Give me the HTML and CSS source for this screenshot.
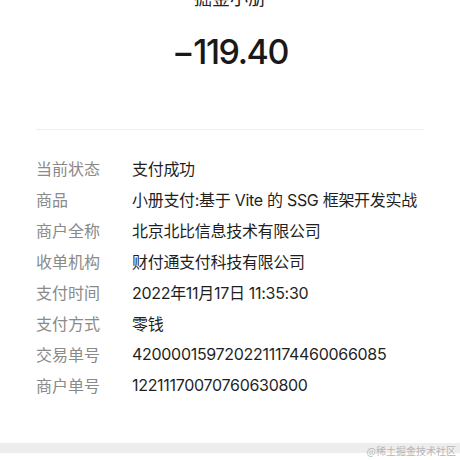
FILE: index.html
```html
<!DOCTYPE html>
<html lang="zh-CN">
<head>
<meta charset="utf-8">
<link rel="stylesheet" href="styles.css">
</head>
<body>
<div class="page">
  <div class="head">
    <div class="merchant">掘金小册</div>
    <div class="amount">−119.40</div>
  </div>
  <div class="divider"></div>
  <div class="details">
    <div class="row"><span class="label">当前状态</span><span class="value">支付成功</span></div>
    <div class="row"><span class="label">商品</span><span class="value">小册支付:基于 Vite 的 SSG 框架开发实战</span></div>
    <div class="row"><span class="label">商户全称</span><span class="value">北京北比信息技术有限公司</span></div>
    <div class="row"><span class="label">收单机构</span><span class="value">财付通支付科技有限公司</span></div>
    <div class="row"><span class="label">支付时间</span><span class="value">2022年11月17日 11:35:30</span></div>
    <div class="row"><span class="label">支付方式</span><span class="value">零钱</span></div>
    <div class="row"><span class="label">交易单号</span><span class="value">4200001597202211174460066085</span></div>
    <div class="row"><span class="label">商户单号</span><span class="value">12211170070760630800</span></div>
  </div>
  <div class="bar"></div>
  <div class="watermark">@稀土掘金技术社区</div>
</div>
</body>
</html>
```

FILE: styles.css
```css
html, body {
  margin: 0;
  padding: 0;
  background: #ffffff;
}
.page {
  position: relative;
  width: 460px;
  height: 460px;
  overflow: hidden;
  font-family: Inter, "Noto Sans CJK SC", sans-serif;
  color: #1a1a1a;
}
.head {
  margin-top: -13px;
  display: flex;
  flex-direction: column;
  align-items: center;
}
.merchant {
  font-size: 18px;
  line-height: 24px;
  color: #222;
}
.amount {
  margin-top: 19px;
  font-size: 34px;
  line-height: 44px;
  font-weight: 500;
  color: #191919;
  letter-spacing: -1.4px;
}
.divider {
  margin: 55px 36px 0;
  height: 1px;
  background: #eeeeee;
}
.details {
  margin-top: 22px;
  padding-left: 36px;
  display: flex;
  flex-direction: column;
}
.row {
  display: grid;
  grid-template-columns: 96px 1fr;
  height: 31px;
  align-items: center;
  font-size: 16px;
}
.label {
  color: #8a8a8a;
}
.value {
  color: #1f1f1f;
  letter-spacing: -0.3px;
}
.bar {
  margin-top: 43px;
  height: 10px;
  background: #ededed;
}
.watermark {
  position: absolute;
  right: 4px;
  top: 444px;
  font-size: 10px;
  line-height: 14px;
  color: #b5b5b5;
  font-family: "Noto Sans CJK SC", sans-serif;
}
```
